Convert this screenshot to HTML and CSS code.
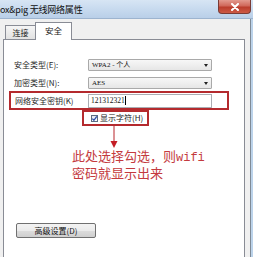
FILE: index.html
```html
<!DOCTYPE html>
<html>
<head>
<meta charset="utf-8">
<link rel="stylesheet" href="styles.css">
</head>
<body>
<div class="window">
  <div class="titlebar">
    <span class="title">ox&amp;pig 无线网络属性</span>
    <div class="close">
      <svg width="10" height="8" viewBox="0 0 10 8"><path d="M2 1 L8 7 M8 1 L2 7" stroke="#fff" stroke-width="2" stroke-linecap="round"/></svg>
    </div>
  </div>
  <div class="main">
    <div class="content">
      <div class="tabs">
        <div class="tab">连接</div>
        <div class="tab active">安全</div>
      </div>
      <div class="panel">
        <div class="field first">
          <span class="label">安全类型(E):</span>
          <div class="select"><span class="val">WPA2 - 个人</span><span class="caret"></span></div>
        </div>
        <div class="field second">
          <span class="label">加密类型(N):</span>
          <div class="select"><span class="val">AES</span><span class="caret"></span></div>
        </div>
        <div class="hl hl-key">
          <span class="label">网络安全密钥(K)</span>
          <div class="input"><span class="val">121312321</span><span class="cursor"></span></div>
        </div>
        <div class="hl hl-show">
          <span class="check"><svg width="7" height="7" viewBox="0 0 7 7"><path d="M1.3 3.6 L2.9 5.3 L5.8 1.3" stroke="#2b4fa8" stroke-width="1.3" fill="none"/></svg></span>
          <span class="show-text">显示字符(H)</span>
        </div>
        <svg class="arrow" width="10" height="23" viewBox="0 0 10 23"><path d="M5 0 V17" stroke="#b8242a" stroke-width="1"/><path d="M1.5 15 L8.5 15 L5 22 Z" fill="#c41d25"/></svg>
        <div class="note">
          <div class="note-line">此处选择勾选，则<span class="latin">wifi</span></div>
          <div class="note-line">密码就显示出来</div>
        </div>
        <div class="adv">高级设置(D)</div>
      </div>
    </div>
    <div class="frame-r"></div>
  </div>
</div>
</body>
</html>
```
FILE: styles.css
```css
* { box-sizing: border-box; }
html, body {
  margin: 0;
  padding: 0;
  width: 253px;
  height: 257px;
  overflow: hidden;
  font-family: "Noto Sans CJK SC", "Liberation Sans", sans-serif;
  font-size: 8px;
  color: #1a1a1a;
}
.window {
  display: flex;
  flex-direction: column;
  width: 253px;
  height: 257px;
}
.titlebar {
  height: 19px;
  display: flex;
  align-items: flex-start;
  background: linear-gradient(to bottom, #d7e5f4 0%, #c6d9ee 55%, #b9cfe8 100%);
  border-bottom: 1px solid #9db4cf;
}
.title {
  font-size: 9px;
  line-height: 19px;
  padding-left: 0;
  color: #111;
  letter-spacing: -0.2px;
}
.close {
  margin-left: auto;
  margin-right: 2px;
  width: 33px;
  height: 14px;
  border: 1px solid #7a3b35;
  border-top: none;
  border-radius: 0 0 4px 4px;
  background: linear-gradient(to bottom, #e39a8e 0%, #d0685a 45%, #bb3d2c 55%, #cc5a45 100%);
  display: flex;
  align-items: center;
  justify-content: center;
}
.main {
  flex: 1;
  display: flex;
  min-height: 0;
}
.content {
  flex: 1;
  background: #f0f0f0;
  padding: 0 5px 0 3px;
  display: flex;
  flex-direction: column;
}
.frame-r {
  width: 3px;
  border-left: 1px solid #7f8a96;
  background: #bcd3ea;
}
.tabs {
  height: 21px;
  display: flex;
  align-items: flex-end;
  padding-left: 2px;
  margin-bottom: -1px;
}
.tab {
  height: 14px;
  width: 31px;
  border: 1px solid #898c95;
  border-bottom: none;
  background: linear-gradient(to bottom, #f5f5f5, #e2e2e2);
  font-size: 8px;
  line-height: 13px;
  text-align: center;
  margin-bottom: 1px;
}
.tab.active {
  height: 18px;
  width: 37px;
  margin-left: -1px;
  margin-bottom: 0;
  background: #fff;
  line-height: 14px;
  position: relative;
  z-index: 1;
  font-size: 8.5px;
}
.panel {
  flex: 1;
  background: #fff;
  border: 1px solid #898c95;
  border-bottom: none;
  display: flex;
  flex-direction: column;
  align-items: flex-start;
}
.field {
  display: flex;
  align-items: center;
  padding-left: 10px;
}
.field.first { margin-top: 19px; }
.field.second { margin-top: 6px; }
.label {
  width: 74px;
  font-size: 8px;
  line-height: 12px;
  color: #2a2a2a;
}
.select {
  width: 124px;
  height: 12px;
  border: 1px solid #a9a9a9;
  border-radius: 1px;
  background: linear-gradient(to bottom, #f7f7f7, #e6e6e6);
  display: flex;
  align-items: center;
  padding-left: 3px;
}
.val {
  font-family: "Liberation Serif", "Noto Sans CJK SC", serif;
  font-size: 7px;
  line-height: 10px;
  color: #111;
}
.caret {
  margin-left: auto;
  margin-right: 3px;
  width: 0;
  height: 0;
  border-left: 2.5px solid transparent;
  border-right: 2.5px solid transparent;
  border-top: 3px solid #222;
}
.hl {
  border: 2px solid #b42a2e;
  display: flex;
  align-items: center;
}
.hl-key {
  margin-top: 2px;
  margin-left: 5px;
  width: 220px;
  height: 19px;
  padding-left: 4px;
}
.hl-key .label { width: 73px; }
.input {
  width: 124px;
  height: 14px;
  border: 1px solid #abadb3;
  background: #fff;
  display: flex;
  align-items: center;
  padding-left: 2px;
}
.input .val {
  font-size: 7.5px;
}
.cursor {
  width: 1px;
  height: 9px;
  background: #000;
  margin-left: 0;
}
.hl-show {
  margin-left: 78px;
  width: 67px;
  height: 16px;
  padding-left: 7px;
}
.check {
  width: 7px;
  height: 7px;
  border: 1px solid #5d6b80;
  background: linear-gradient(to bottom, #e2e8f0, #fbfcfd);
  display: flex;
  align-items: center;
  justify-content: center;
}
.check svg { flex-shrink: 0; }
.show-text {
  margin-left: 2px;
  font-size: 8px;
  line-height: 12px;
}
.arrow {
  display: block;
  margin-left: 105px;
}
.note {
  margin-left: 68px;
  display: flex;
  flex-direction: column;
  row-gap: 1px;
  color: #c43a3e;
}
.note-line {
  font-size: 13px;
  line-height: 14px;
  white-space: nowrap;
}
.note .latin {
  font-family: "Liberation Mono", monospace;
  font-size: 12px;
}
.adv {
  margin-top: 43px;
  margin-left: 12px;
  width: 80px;
  height: 15px;
  border: 1px solid #707070;
  border-radius: 2px;
  background: linear-gradient(to bottom, #f3f3f3 0%, #ebebeb 50%, #dddddd 51%, #cfcfcf 100%);
  font-size: 8px;
  line-height: 13px;
  text-align: center;
  color: #111;
}
```
